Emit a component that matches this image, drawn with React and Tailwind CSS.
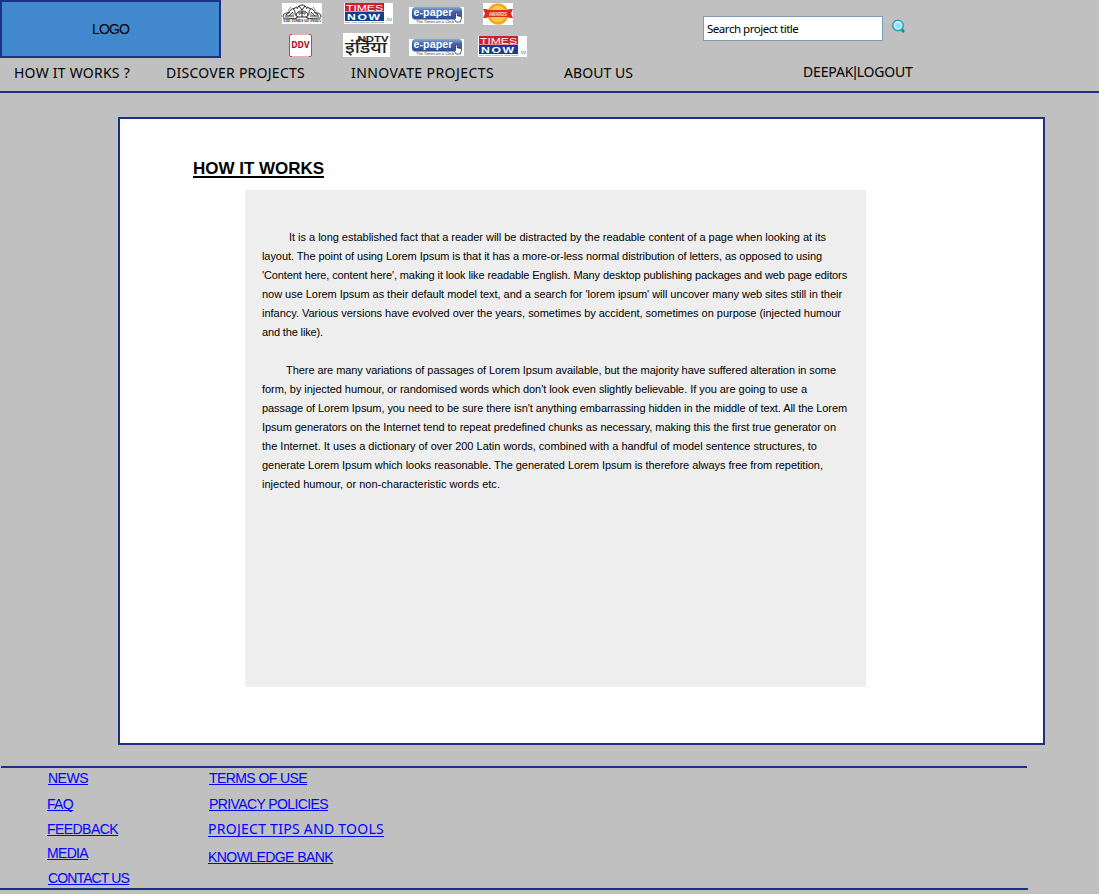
const comic = "font-['Comic_Sans_MS','Noto_Sans',sans-serif] text-[14px] leading-[20px] text-black whitespace-nowrap";

function TimesOfIndia({ className }) {
  return (
    <svg className={className} width="40" height="21" viewBox="0 0 40 21">
      <rect width="40" height="21" fill="#fff" />
      <g fill="none" stroke="#222" strokeWidth="1">
        <path d="M1 14c0-3 2-4 4-4s3-3 5-4 3 2 3 4 4 4 2 5-10 0-14 0" />
        <path d="M39 14c0-3-2-4-4-4s-3-3-5-4-3 2-3 4-4 4-2 5 10 0 14 0" />
        <path d="M14 13c0-3 2-5 6-5s6 2 6 5M15 6c1-3 3-4 5-4s4 1 5 4M17 3l3 4 3-4M14 14h12M16 10h8M20 8v6" />
        <path d="M4 12l4-3M7 13l4-4M36 12l-4-3M33 13l-4-4M11 6l4-2M29 6l-4-2M3 13h9M28 13h9" />
        <path d="M6 8l3-4M34 8l-3-4M17 12l2-2M23 12l-2-2M8 11h5M27 11h5" stroke="#888" />
      </g>
      <text x="1" y="19.4" fontFamily="Liberation Serif" fontWeight="700" fontSize="4.2" textLength="38" lengthAdjust="spacingAndGlyphs" fill="#111">THE TIMES OF INDIA</text>
    </svg>
  );
}

function TimesNow({ className }) {
  return (
    <svg className={className} width="49" height="21" viewBox="0 0 49 21">
      <rect width="49" height="21" fill="#fff" />
      <rect x="1" y="0" width="39" height="8.5" fill="#cc2030" />
      <rect x="1" y="9" width="39" height="9" fill="#163d91" />
      <g fontFamily="Liberation Sans" fill="#fff">
        <text x="2" y="7.8" fontSize="9.4" textLength="37" lengthAdjust="spacingAndGlyphs">TIMES</text>
        <text transform="translate(3 16.9) scale(1.3 1)" fontSize="9.4" fontWeight="700" letterSpacing="1.2">NOW</text>
      </g>
      <text x="1" y="20.4" fontFamily="Liberation Sans" fontSize="2.4" textLength="39" fill="#444">Now India knows the latest News</text>
      <text x="41" y="18" fontFamily="Liberation Sans" fontSize="6" textLength="7" fill="#666">.tv</text>
    </svg>
  );
}

function EPaper({ className, id }) {
  return (
    <svg className={className} width="55" height="17" viewBox="0 0 55 17">
      <defs>
        <linearGradient id={id} x1="0" y1="0" x2="0" y2="1">
          <stop offset="0" stopColor="#8ba8d8" />
          <stop offset="0.4" stopColor="#3f62ad" />
          <stop offset="1" stopColor="#2b4c96" />
        </linearGradient>
      </defs>
      <rect width="55" height="17" fill="#fff" />
      <rect x="3" y="0" width="50" height="12.5" rx="3.5" fill={`url(#${id})`} />
      <text x="4.5" y="9.3" fontFamily="Liberation Sans" fontSize="11" fontWeight="700" textLength="39" lengthAdjust="spacingAndGlyphs" fill="#fff">e-paper</text>
      <text x="7" y="16" fontFamily="Liberation Sans" fontSize="4" textLength="38" lengthAdjust="spacingAndGlyphs" fill="#334">The Times on a Click</text>
      <path d="M46.5 5.5v6l-1.8-.8 2.3 4.3h4.2l1.2-3.5V9.6l-4.2-.8V5.5z" fill="#fff" stroke="#223" strokeWidth="0.7" />
    </svg>
  );
}

function AwardBadge({ className }) {
  return (
    <svg className={className} width="30" height="22" viewBox="0 0 30 22">
      <rect width="30" height="22" fill="#fff" />
      <circle cx="15" cy="11" r="10.6" fill="#f0a526" stroke="#f3c05a" strokeDasharray="1.5 1" />
      <circle cx="15" cy="11" r="8.2" fill="#fdcb4c" />
      <path d="M0 6h3l3 1h18l3-1h3l-2 4.5 2 4.5h-3l-3-1H6l-3 1H0l2-4.5z" fill="#dd2a22" />
      <text x="6" y="12.6" fontFamily="Liberation Sans" fontSize="5.6" fontWeight="700" textLength="18" lengthAdjust="spacingAndGlyphs" fill="#ffe3d5">AWARDS</text>
    </svg>
  );
}

function Ddv({ className }) {
  return (
    <svg className={className} width="23" height="23" viewBox="0 0 23 23">
      <rect x="0.5" y="0.5" width="22" height="22" rx="1.5" fill="#fff" stroke="#c0404e" />
      <path d="M3 .5h17M3 22.5h17" stroke="#e8b0b6" />
      <text x="2.2" y="13.8" fontFamily="DejaVu Sans" fontSize="9" fontWeight="700" textLength="18.5" lengthAdjust="spacingAndGlyphs" fill="#b5152b">DDV</text>
    </svg>
  );
}

function NdtvIndia({ className }) {
  return (
    <svg className={className} width="47" height="24" viewBox="0 0 47 24">
      <rect width="47" height="24" fill="#fff" />
      <text x="14.5" y="9.4" fontFamily="Liberation Sans" fontSize="9.6" fontWeight="700" textLength="31" lengthAdjust="spacingAndGlyphs" fill="#222">NDTV</text>
      <text x="2" y="19.8" fontFamily="Noto Sans Devanagari, Noto Sans, sans-serif" fontSize="16.5" fontWeight="500" textLength="42" lengthAdjust="spacingAndGlyphs" fill="#222">इंडिया</text>
      <circle cx="22" cy="5.8" r="1.3" fill="#d8392b" />
    </svg>
  );
}

function SearchIcon() {
  return (
    <svg className="ml-[8px] mt-[3px]" width="15" height="15" viewBox="0 0 15 15">
      <path d="M10 10l3 3" stroke="#1d7f9d" strokeWidth="2.6" />
      <circle cx="7" cy="6.4" r="5.2" fill="#d9f5fc" stroke="#2ba1c0" strokeWidth="1.6" />
      <circle cx="7" cy="6.6" r="2.8" fill="#8fe0f8" />
    </svg>
  );
}

function Header() {
  return (
    <header className="h-[93px] border-b-2 border-[#1a3285]">
      <div className="flex h-[58px] items-start">
        <div className="flex h-[58px] w-[221px] items-center justify-center border-2 border-[#1a3285] bg-[#4288ce] pt-px text-[14px] tracking-[-0.85px] text-black">
          <span>LOGO</span>
        </div>
        <div className="ml-[61px] w-[246px]">
          <div className="flex h-[33px] items-start pt-[3px]">
            <TimesOfIndia />
            <TimesNow className="ml-[22px]" />
            <EPaper className="ml-[16px] mt-[4px]" id="pill-top" />
            <AwardBadge className="ml-[19px]" />
          </div>
          <div className="flex h-[25px] items-start">
            <Ddv className="ml-[7px] mt-px" />
            <NdtvIndia className="ml-[31px]" />
            <EPaper className="ml-[19px] mt-[6px]" id="pill-bottom" />
            <TimesNow className="ml-[14px] mt-[3px]" />
          </div>
        </div>
        <div className="ml-[175px] flex pt-[16px]">
          <input
            className="h-[25px] w-[180px] border border-[#7f9db9] bg-white pb-px pl-[3px] font-['Tahoma','Noto_Sans',sans-serif] text-[11.5px] tracking-[-0.47px] text-black outline-none"
            defaultValue="Search project title"
          />
          <SearchIcon />
        </div>
      </div>
      <nav className={`flex pl-[14px] pt-[5px] ${comic}`}>
        <a className="w-[152px] tracking-[0.243px]">HOW IT WORKS ?</a>
        <a className="w-[185px] tracking-[0.259px]">DISCOVER PROJECTS</a>
        <a className="w-[213px] tracking-[0.419px]">INNOVATE PROJECTS</a>
        <a className="w-[239px] tracking-[0.055px]">ABOUT US</a>
        <a className="-mt-px tracking-[-0.17px]">
          DEEPAK<span className="font-['Liberation_Sans']">|</span>LOGOUT
        </a>
      </nav>
    </header>
  );
}

function Article() {
  return (
    <main className="ml-[118px] mt-[24px] h-[628px] w-[927px] border-2 border-[#1a3285] bg-white pl-[73px] pt-[39px] text-black">
      <h1 className="h-[20px] w-[131px] whitespace-nowrap border-b-2 border-black text-[17px] font-bold leading-[22px] tracking-[-0.02px]">HOW IT WORKS</h1>
      <section className="ml-[52px] mt-[12px] h-[497px] w-[621px] whitespace-nowrap bg-[#eee] pl-[17px] pt-[38px] text-[11px] leading-[19px]">
        <p>
          <span className="block pl-[27px] tracking-[-0.025px]">It is a long established fact that a reader will be distracted by the readable content of a page when looking at its</span>
          <span className="block tracking-[-0.07px]">layout. The point of using Lorem Ipsum is that it has a more-or-less normal distribution of letters, as opposed to using</span>
          <span className="block tracking-[-0.112px]">'Content here, content here', making it look like readable English. Many desktop publishing packages and web page editors</span>
          <span className="block tracking-[-0.036px]">now use Lorem Ipsum as their default model text, and a search for 'lorem ipsum' will uncover many web sites still in their</span>
          <span className="block tracking-[-0.023px]">infancy. Various versions have evolved over the years, sometimes by accident, sometimes on purpose (injected humour</span>
          <span className="block tracking-[-0.142px]">and the like).</span>
        </p>
        <p className="mt-[19px]">
          <span className="block pl-[24px] tracking-[-0.06px]">There are many variations of passages of Lorem Ipsum available, but the majority have suffered alteration in some</span>
          <span className="block tracking-[-0.049px]">form, by injected humour, or randomised words which don't look even slightly believable. If you are going to use a</span>
          <span className="block tracking-[-0.074px]">passage of Lorem Ipsum, you need to be sure there isn't anything embarrassing hidden in the middle of text. All the Lorem</span>
          <span className="block tracking-[-0.041px]">Ipsum generators on the Internet tend to repeat predefined chunks as necessary, making this the first true generator on</span>
          <span className="block tracking-[-0.002px]">the Internet. It uses a dictionary of over 200 Latin words, combined with a handful of model sentence structures, to</span>
          <span className="block tracking-[-0.045px]">generate Lorem Ipsum which looks reasonable. The generated Lorem Ipsum is therefore always free from repetition,</span>
          <span className="block tracking-[0.028px]">injected humour, or non-characteristic words etc.</span>
        </p>
      </section>
    </main>
  );
}

const link = "block w-fit whitespace-nowrap border-b border-[#00f]";

function Footer() {
  return (
    <footer className="mt-[21px] w-[1028px]">
      <div className="ml-px h-[2px] w-[1026px] bg-[#1a3285]" />
      <div className="flex h-[120px] text-[14px] leading-[17px] text-[#00f]">
        <div className="w-[161px] pl-[47px] pt-[2px]">
          <a className={`${link} ml-px h-[15px] tracking-[-0.5px]`}>NEWS</a>
          <a className={`${link} mt-[11px] h-[15px] tracking-[-0.67px]`}>FAQ</a>
          <a className={`${link} mt-[10px] h-[15px] tracking-[-0.56px]`}>FEEDBACK</a>
          <a className={`${link} mt-[9px] h-[15px] tracking-[-0.67px]`}>MEDIA</a>
          <a className={`${link} ml-px mt-[10px] h-[15px] tracking-[-0.87px]`}>CONTACT US</a>
        </div>
        <div className="w-[180px] pl-[47px] pt-[2px]">
          <a className={`${link} ml-px h-[15px] tracking-[-0.585px]`}>TERMS OF USE</a>
          <a className={`${link} ml-px mt-[11px] h-[15px] tracking-[-0.6px]`}>PRIVACY POLICIES</a>
          <a className={`${link} mt-[10px] h-[16px] font-['Comic_Sans_MS','Noto_Sans',sans-serif] leading-[15px] tracking-[0.266px]`}>PROJECT TIPS AND TOOLS</a>
          <a className={`${link} mt-[12px] h-[15px] tracking-[-0.57px]`}>KNOWLEDGE BANK</a>
        </div>
      </div>
      <div className="h-[2px] w-[1028px] bg-[#1a3285]" />
    </footer>
  );
}

export default function App() {
  return (
    <div className="h-[894px] w-[1099px] overflow-hidden bg-[#c0c0c0] font-['Liberation_Sans',Arial,sans-serif]">
      <Header />
      <Article />
      <Footer />
    </div>
  );
}
